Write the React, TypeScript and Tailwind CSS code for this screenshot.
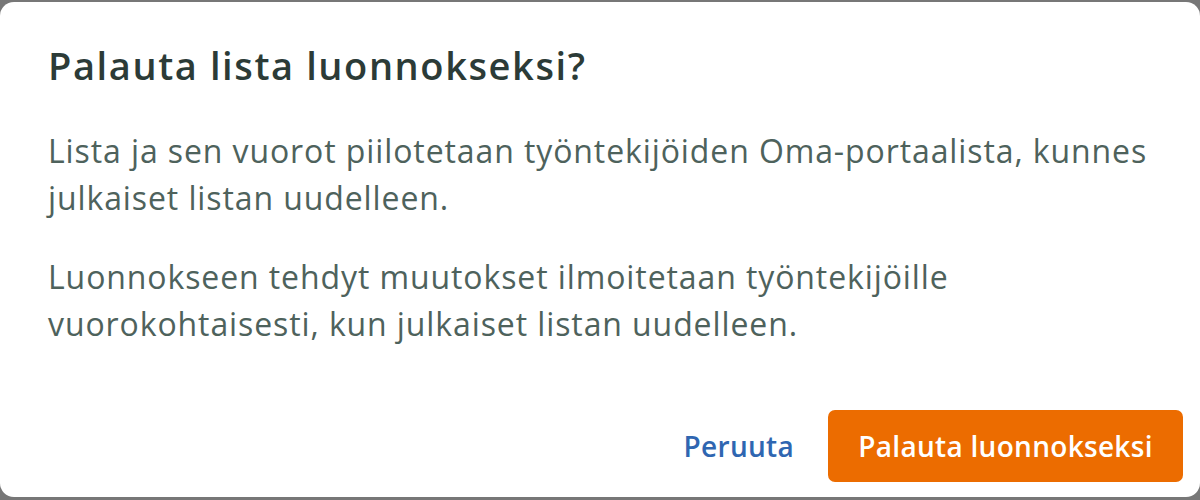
export default function App() {
  return (
    <div className="h-[500px] w-[1200px] bg-[#777777] pt-[2px] pb-[3px] font-['Open_Sans',sans-serif]">
      <div className="flex h-full flex-col rounded-[14px] bg-white pl-12 pr-[17px] pb-[15px]">
        <h2 className="mt-[39px] text-[38px] leading-[48px] font-semibold tracking-[1.6px] text-[#2c3b37]">
          Palauta lista luonnokseksi?
        </h2>
        <div className="mt-[38px] text-[32px] leading-[47px] tracking-[0.9px] text-[#4e625c]">
          <p>
            Lista ja sen vuorot piilotetaan työntekijöiden Oma-portaalista, kunnes
            julkaiset listan uudelleen.
          </p>
          <p className="mt-8">
            Luonnokseen tehdyt muutokset ilmoitetaan työntekijöille vuorokohtaisesti,
            kun julkaiset listan uudelleen.
          </p>
        </div>
        <div className="mt-auto flex items-center justify-end gap-[34px]">
          <button className="text-[28px] font-semibold tracking-[0.3px] text-[#2f66b1]">Peruuta</button>
          <button className="h-[72px] w-[355px] rounded-[7px] bg-[#ec6c00] text-[28px] font-semibold tracking-[0.3px] text-white">
            Palauta luonnokseksi
          </button>
        </div>
      </div>
    </div>
  );
}
